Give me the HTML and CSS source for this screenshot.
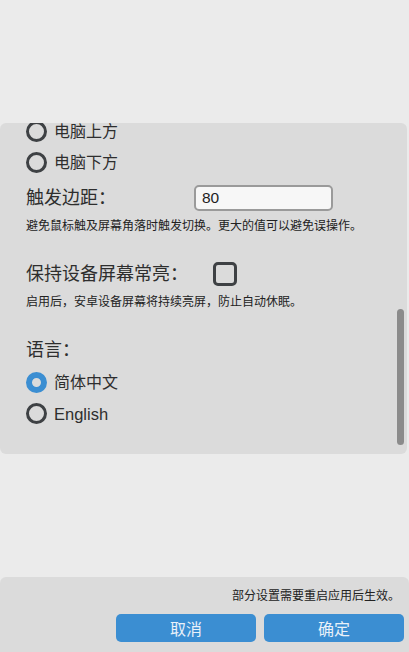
FILE: index.html
```html
<!DOCTYPE html>
<html lang="zh-CN">
<head>
<meta charset="utf-8">
<title>设置</title>
<link rel="stylesheet" href="styles.css">
</head>
<body>
<div class="page">
  <div class="top-space"></div>
  <section class="panel">
    <div class="content">
      <label class="option"><span class="radio"></span><span class="option-text">电脑上方</span></label>
      <label class="option"><span class="radio"></span><span class="option-text">电脑下方</span></label>

      <div class="field-row">
        <span class="label label-edge">触发边距：</span>
        <span class="input">80</span>
      </div>
      <p class="hint hint-edge">避免鼠标触及屏幕角落时触发切换。更大的值可以避免误操作。</p>

      <div class="field-row check-row">
        <span class="label label-keep">保持设备屏幕常亮：</span>
        <span class="checkbox"></span>
      </div>
      <p class="hint hint-keep">启用后，安卓设备屏幕将持续亮屏，防止自动休眠。</p>

      <div class="label lang-label">语言：</div>
      <label class="option lang-first"><span class="radio checked"></span><span class="option-text">简体中文</span></label>
      <label class="option"><span class="radio"></span><span class="option-text latin">English</span></label>
    </div>
    <div class="scrollbar"></div>
  </section>
  <footer class="footer">
    <div class="note">部分设置需要重启应用后生效。</div>
    <div class="buttons">
      <button class="btn">取消</button>
      <button class="btn">确定</button>
    </div>
  </footer>
</div>
</body>
</html>
```

FILE: styles.css
```css
* { box-sizing: border-box; }

html, body {
  margin: 0;
  padding: 0;
  background: #ebebeb;
}

body {
  font-family: "Liberation Sans", "Noto Sans CJK SC", sans-serif;
  color: #2e2e2e;
}

.page {
  width: 409px;
  height: 652px;
  display: flex;
  flex-direction: column;
  overflow: hidden;
}

.top-space {
  height: 123px;
  flex: none;
}

.panel {
  position: relative;
  flex: none;
  height: 331px;
  width: 407px;
  background: #dbdbdb;
  border-radius: 6px;
  overflow: hidden;
}

.content {
  margin-top: -7px;
  padding-left: 26px;
  display: flex;
  flex-direction: column;
}

.option {
  display: flex;
  align-items: center;
  height: 31px;
  gap: 7px;
}

.radio {
  width: 21px;
  height: 21px;
  border-radius: 50%;
  border: 3px solid #3e4144;
  flex: none;
}

.radio.checked {
  border: 6.5px solid #3b8ed2;
  background: #dbdbdb;
}

.option-text {
  font-size: 16px;
  line-height: 20px;
  color: #2e2e2e;
}

.option-text.latin {
  font-size: 16.5px;
}

.field-row {
  display: flex;
  align-items: center;
  height: 26px;
  margin-top: 6.5px;
}

.label {
  font-size: 18px;
  line-height: 24px;
  color: #2e2e2e;
}

.label-edge {
  width: 168px;
}

.input {
  width: 139px;
  height: 26px;
  border: 2px solid #9a9a9a;
  border-radius: 5px;
  background: #f7f7f7;
  font-size: 15.5px;
  line-height: 22px;
  padding-left: 6px;
  color: #1e1e1e;
}

.hint {
  margin: 7px 0 0;
  font-size: 12px;
  line-height: 16px;
  color: #222;
}

.check-row {
  margin-top: 28px;
  height: 24px;
}

.label-keep {
  width: 187px;
}

.checkbox {
  width: 24px;
  height: 24px;
  border: 3px solid #3e4144;
  border-radius: 5px;
  flex: none;
}

.hint-keep {
  margin-top: 8px;
}

.lang-label {
  margin-top: 28.5px;
}

.lang-first {
  margin-top: 5px;
}

.scrollbar {
  position: absolute;
  right: 3px;
  top: 186px;
  width: 7px;
  height: 136px;
  border-radius: 4px;
  background: #8b8b8b;
}

.footer {
  margin-top: auto;
  height: 75px;
  background: #dbdbdb;
  border-radius: 6px 6px 0 0;
  padding: 10px 5px 10px 0;
  display: flex;
  flex-direction: column;
  align-items: flex-end;
}

.note {
  font-size: 12px;
  line-height: 18px;
  color: #222;
  margin-right: 4px;
}

.buttons {
  margin-top: 9px;
  display: flex;
  gap: 8px;
}

.btn {
  width: 140px;
  height: 28px;
  border: none;
  border-radius: 5px;
  background: #3b8ed2;
  color: #e9f1f9;
  font-family: "Noto Sans CJK SC", sans-serif;
  font-size: 16px;
  line-height: 28px;
  padding: 0;
}
```
